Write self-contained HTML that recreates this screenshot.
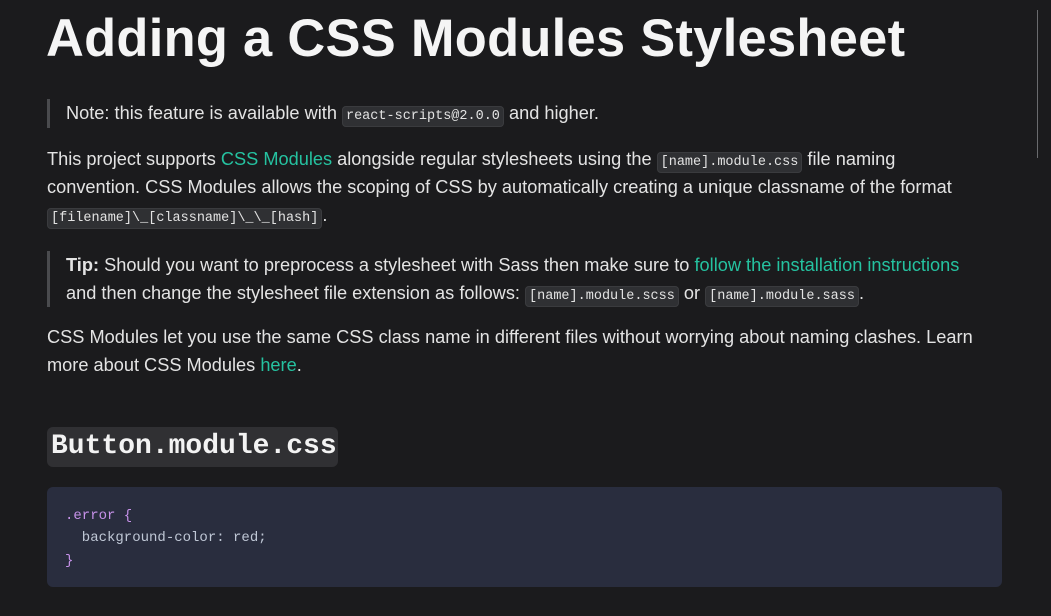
<!DOCTYPE html>
<html><head><style>
body{margin:0;width:1051px;height:616px;background:#1b1b1d;overflow:hidden;font-family:"Liberation Sans",sans-serif;color:#e3e3e3;position:relative}
.a{position:absolute;white-space:nowrap;font-size:18.2px;line-height:28px}
h1{position:absolute;left:46px;top:4px;margin:0;font-size:52.4px;line-height:70px;font-weight:bold;color:#f5f5f5;white-space:nowrap;letter-spacing:0.3px}
code{font-family:"Liberation Mono",monospace;font-size:13.5px;background:#2f3033;border:1px solid #3a3b3e;border-radius:4px;padding:2px 3px;color:#e3e3e3}
a{color:#25c2a0;text-decoration:none}
.bar{position:absolute;left:47px;width:3px;background:#4a4b4e}
.h2{position:absolute;left:47px;top:427px;width:291px;height:40px;background:#303033;border-radius:6px;font-family:"Liberation Mono",monospace;font-weight:bold;font-size:28px;line-height:40px;color:#f3f3f3;text-indent:4px}
.code{position:absolute;left:47px;top:487px;width:955px;height:100px;background:#292d3e;border-radius:6px}
.cl{position:absolute;left:65px;font-family:"Liberation Mono",monospace;font-size:14px;line-height:22px;color:#bfc7d5;white-space:pre}
.p{color:#c792ea}
</style></head><body>
<h1>Adding a CSS Modules Stylesheet</h1>
<div class="bar" style="top:99px;height:29px"></div>
<div class="a" style="left:66px;top:99px">Note: this feature is available with <code>react-scripts@2.0.0</code> and higher.</div>
<div class="a" style="left:47px;top:145px">This project supports <a>CSS Modules</a> alongside regular stylesheets using the <code>[name].module.css</code> file naming</div>
<div class="a" style="left:47px;top:173px">convention. CSS Modules allows the scoping of CSS by automatically creating a unique classname of the format</div>
<div class="a" style="left:47px;top:201px"><code>[filename]\_[classname]\_\_[hash]</code>.</div>
<div class="bar" style="top:251px;height:56px"></div>
<div class="a" style="left:66px;top:251px"><b>Tip:</b> Should you want to preprocess a stylesheet with Sass then make sure to <a>follow the installation instructions</a></div>
<div class="a" style="left:66px;top:279px">and then change the stylesheet file extension as follows: <code>[name].module.scss</code> or <code>[name].module.sass</code>.</div>
<div class="a" style="left:47px;top:323px">CSS Modules let you use the same CSS class name in different files without worrying about naming clashes. Learn</div>
<div class="a" style="left:47px;top:351px">more about CSS Modules <a>here</a>.</div>
<div class="h2">Button.module.css</div>
<div class="code"></div>
<div class="cl" style="top:505px"><span class="p">.error {</span></div>
<div class="cl" style="top:527px">  background-color: red;</div>
<div class="cl" style="top:550px"><span class="p">}</span></div>
<div style="position:absolute;left:1037px;top:10px;width:1px;height:148px;background:#6a6b6e"></div>
</body></html>
